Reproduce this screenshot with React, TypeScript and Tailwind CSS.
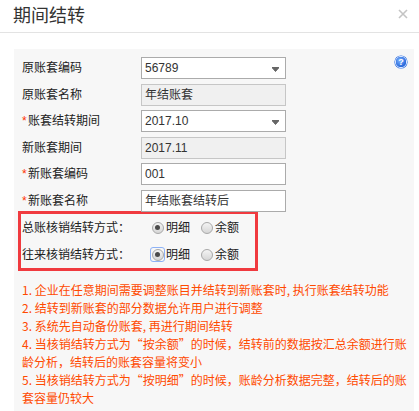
import React from "react";

const FONT = "font-['Liberation_Sans','Noto_Sans_CJK_SC',sans-serif]";

function Field({ value, disabled, select }: { value: string; disabled?: boolean; select?: boolean }) {
  return (
    <div
      className={
        "relative h-[22px] w-[145px] flex items-center pl-[3px] text-[12px] text-[#333] border " +
        (disabled ? "bg-[#f0f0f0] border-[#c6c6c6]" : "bg-white border-[#ababab]")
      }
    >
      <span>{value}</span>
      {select && (
        <svg className="absolute right-[6px] top-[9px]" width="7" height="5" viewBox="0 0 7 5">
          <path d="M0 0.5 H7 M0.5 1 L3.5 4.5 L6.5 1 Z" stroke="#666" strokeWidth="1" fill="#666" />
        </svg>
      )}
    </div>
  );
}

function Label({ text, req }: { text: string; req?: boolean }) {
  return (
    <div className="w-[119px] flex items-center text-[12px] text-[#222]">
      {req && <span className="text-[#ff3300] w-[6px]">*</span>}
      <span>{text}</span>
    </div>
  );
}

function Radio({ checked, focus }: { checked?: boolean; focus?: boolean }) {
  return (
    <span
      className={
        "w-[15px] h-[15px] flex items-center justify-center rounded-[3px] " +
        (focus ? "border border-[#8db2f6]" : "border border-transparent")
      }
    >
      <span className="w-[12px] h-[12px] rounded-full border border-[#a8a8a8] bg-gradient-to-b from-[#f4f4f4] to-[#d6d6d6] flex items-center justify-center">
        {checked && <span className="w-[5px] h-[5px] rounded-full bg-[#4a4a4a]" />}
      </span>
    </span>
  );
}

function RadioRow({ label, focus }: { label: string; focus?: boolean }) {
  return (
    <div className="h-[18px] flex items-center text-[12px] text-[#222]">
      <span className="w-[128px]">{label}</span>
      <Radio checked focus={focus} />
      <span className="ml-[1px]">明细</span>
      <span className="ml-[9px]">
        <Radio />
      </span>
      <span className="ml-[1px]">余额</span>
    </div>
  );
}

export default function App() {
  return (
    <div className={"w-[419px] h-[411px] bg-white relative overflow-hidden " + FONT}>
      <div className="h-[33px] border-b border-[#e3e3e3] flex items-center pl-[13px] relative">
        <span className="text-[18px] text-[#333] leading-none">期间结转</span>
        <svg className="absolute left-[398px] top-[9px]" width="10" height="10" viewBox="0 0 10 10">
          <path d="M1 1 L9 9 M9 1 L1 9" stroke="#c4c4c4" strokeWidth="1.6" />
        </svg>
      </div>
      <div className="mt-[16px] ml-[14px] w-[400px] h-[380px] bg-[#f7f7f7] relative pt-[8px] pl-[8px]">
        <svg className="absolute right-[6px] top-[6px]" width="14" height="14" viewBox="0 0 14 14">
          <defs>
            <radialGradient id="hg" cx="0.4" cy="0.35" r="0.7">
              <stop offset="0" stopColor="#7fb4ff" />
              <stop offset="1" stopColor="#1d5fd6" />
            </radialGradient>
          </defs>
          <circle cx="7" cy="7" r="6.6" fill="#2f6fe0" />
          <circle cx="7" cy="7" r="5.6" fill="none" stroke="#dbe8ff" strokeWidth="1" />
          <circle cx="7" cy="7" r="5" fill="url(#hg)" />
          <text x="7" y="10.4" textAnchor="middle" fontSize="9" fontWeight="bold" fill="#fff" fontFamily="Liberation Sans, sans-serif">?</text>
        </svg>
        <div className="flex flex-col gap-[4.5px]">
          <div className="flex items-center">
            <Label text="原账套编码" />
            <Field value="56789" select />
          </div>
          <div className="flex items-center">
            <Label text="原账套名称" />
            <Field value="年结账套" disabled />
          </div>
          <div className="flex items-center">
            <Label text="账套结转期间" req />
            <Field value="2017.10" select />
          </div>
          <div className="flex items-center">
            <Label text="新账套期间" />
            <Field value="2017.11" disabled />
          </div>
          <div className="flex items-center">
            <Label text="新账套编码" req />
            <Field value="001" />
          </div>
          <div className="flex items-center">
            <Label text="新账套名称" req />
            <Field value="年结账套结转后" />
          </div>
        </div>
        <div className="-ml-[4px] -mt-[1px] w-[240px] h-[60px] border-[3px] border-[#f03a3f] pt-[5px] pl-[1px] flex flex-col gap-[9px]">
          <RadioRow label="总账核销结转方式：" />
          <RadioRow label="往来核销结转方式：" focus />
        </div>
        <div className="mt-[10px] w-[388px] text-[12px] leading-[18px] text-[#ff4a00] font-['Noto_Sans_CJK_SC',sans-serif]">
          <p>1. 企业在任意期间需要调整账目并结转到新账套时, 执行账套结转功能</p>
          <p>2. 结转到新账套的部分数据允许用户进行调整</p>
          <p>3. 系统先自动备份账套, 再进行期间结转</p>
          <p>4. 当核销结转方式为“按余额”的时候，结转前的数据按汇总余额进行账龄分析，结转后的账套容量将变小</p>
          <p>5. 当核销结转方式为“按明细”的时候，账龄分析数据完整，结转后的账套容量仍较大</p>
        </div>
      </div>
    </div>
  );
}
